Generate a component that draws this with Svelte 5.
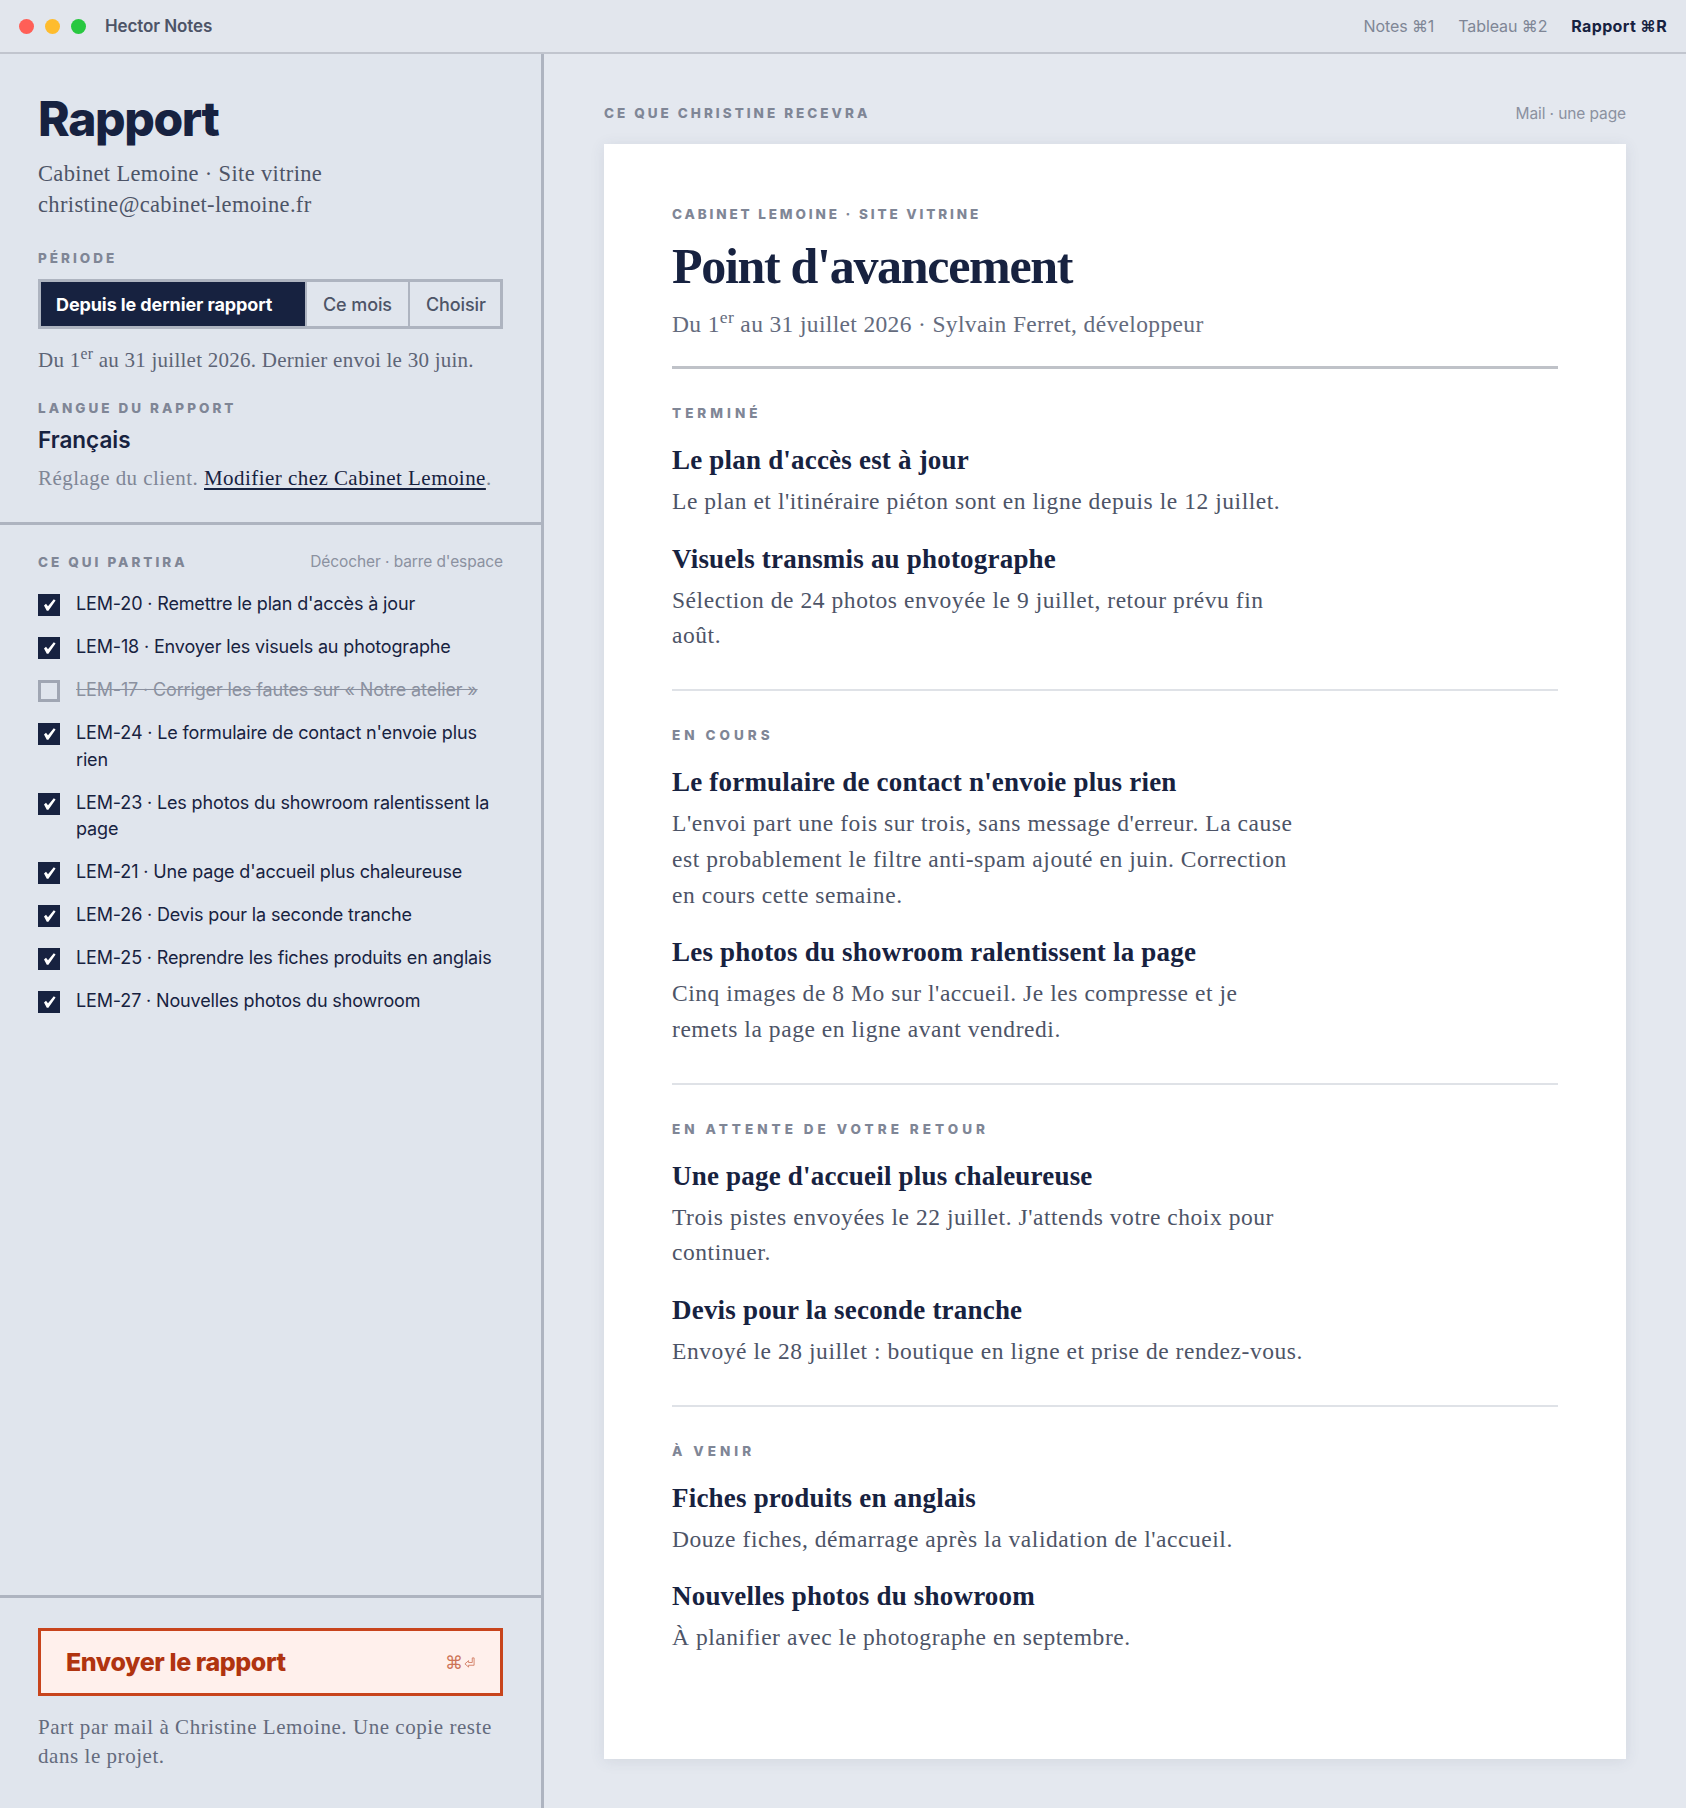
<script>
  const items = [
    { id: "LEM-20", label: "Remettre le plan d'accès à jour", on: true },
    { id: "LEM-18", label: "Envoyer les visuels au photographe", on: true },
    { id: "LEM-17", label: "Corriger les fautes sur « Notre atelier »", on: false },
    { id: "LEM-24", label: "Le formulaire de contact n'envoie plus rien", on: true },
    { id: "LEM-23", label: "Les photos du showroom ralentissent la page", on: true },
    { id: "LEM-21", label: "Une page d'accueil plus chaleureuse", on: true },
    { id: "LEM-26", label: "Devis pour la seconde tranche", on: true },
    { id: "LEM-25", label: "Reprendre les fiches produits en anglais", on: true },
    { id: "LEM-27", label: "Nouvelles photos du showroom", on: true }
  ];

  const sections = [
    {
      title: "Terminé",
      entries: [
        { h: "Le plan d'accès est à jour", p: "Le plan et l'itinéraire piéton sont en ligne depuis le 12 juillet." },
        { h: "Visuels transmis au photographe", p: "Sélection de 24 photos envoyée le 9 juillet, retour prévu fin août." }
      ]
    },
    {
      title: "En cours",
      entries: [
        { h: "Le formulaire de contact n'envoie plus rien", p: "L'envoi part une fois sur trois, sans message d'erreur. La cause est probablement le filtre anti-spam ajouté en juin. Correction en cours cette semaine." },
        { h: "Les photos du showroom ralentissent la page", p: "Cinq images de 8 Mo sur l'accueil. Je les compresse et je remets la page en ligne avant vendredi." }
      ]
    },
    {
      title: "En attente de votre retour",
      entries: [
        { h: "Une page d'accueil plus chaleureuse", p: "Trois pistes envoyées le 22 juillet. J'attends votre choix pour continuer." },
        { h: "Devis pour la seconde tranche", p: "Envoyé le 28 juillet : boutique en ligne et prise de rendez-vous." }
      ]
    },
    {
      title: "À venir",
      entries: [
        { h: "Fiches produits en anglais", p: "Douze fiches, démarrage après la validation de l'accueil." },
        { h: "Nouvelles photos du showroom", p: "À planifier avec le photographe en septembre." }
      ]
    }
  ];
</script>

<div class="app">
  <header class="topbar">
    <div class="lights">
      <span class="light red"></span>
      <span class="light amber"></span>
      <span class="light green"></span>
    </div>
    <span class="appname">Hector Notes</span>
    <nav class="tabs">
      <span>Notes ⌘1</span>
      <span>Tableau ⌘2</span>
      <span class="current">Rapport ⌘R</span>
    </nav>
  </header>

  <div class="body">
    <aside class="side">
      <section class="settings">
        <h1>Rapport</h1>
        <p class="client">Cabinet Lemoine · Site vitrine<br />christine@cabinet-lemoine.fr</p>

        <div class="eyebrow period-label">Période</div>
        <div class="segments">
          <span class="seg active">Depuis le dernier rapport</span>
          <span class="seg">Ce mois</span>
          <span class="seg">Choisir</span>
        </div>
        <p class="range">Du 1<sup>er</sup> au 31 juillet 2026. Dernier envoi le 30 juin.</p>

        <div class="eyebrow lang-label">Langue du rapport</div>
        <div class="lang">Français</div>
        <p class="note">Réglage du client. <a href="#client">Modifier chez Cabinet Lemoine</a>.</p>
      </section>

      <section class="picks">
        <div class="picks-head">
          <span class="eyebrow">Ce qui partira</span>
          <span class="hint">Décocher · barre d'espace</span>
        </div>
        <ul>
          {#each items as item}
            <li class:off={!item.on}>
              <span class="box">
                {#if item.on}
                  <svg viewBox="0 0 22 22" width="22" height="22"><path d="M6 11.500L8 9.800L10 12.200L15.800 5.300L17.600 6.500L10.400 16.700H8.800Z" fill="#fff" /></svg>
                {/if}
              </span>
              <span class="pick-text">{item.id} · {item.label}</span>
            </li>
          {/each}
        </ul>
      </section>

      <section class="send">
        <button class="send-btn">
          <span>Envoyer le rapport</span>
          <span class="keys">⌘<svg viewBox="0 0 12 12" width="11" height="11"><path d="M1 7.500L5 4V6H9V1H11V9H5V11Z" fill="none" stroke="currentColor" stroke-width="0.900" /></svg></span>
        </button>
        <p class="send-note">Part par mail à Christine Lemoine. Une copie reste dans le projet.</p>
      </section>
    </aside>

    <main class="main">
      <div class="main-head">
        <span class="eyebrow">Ce que Christine recevra</span>
        <span class="hint">Mail · une page</span>
      </div>
      <article class="paper">
        <div class="eyebrow paper-label">Cabinet Lemoine · Site vitrine</div>
        <h2>Point d'avancement</h2>
        <p class="byline">Du 1<sup>er</sup> au 31 juillet 2026 · Sylvain Ferret, développeur</p>

        {#each sections as section}
          <section class="block">
            <div class="eyebrow section-label">{section.title}</div>
            {#each section.entries as entry}
              <h3>{entry.h}</h3>
              <p>{entry.p}</p>
            {/each}
          </section>
        {/each}
      </article>
    </main>
  </div>
</div>

<style>
  :global(body) {
    background: #e4e8ef;
  }
  .app {
    display: flex;
    flex-direction: column;
    min-height: 1808px;
    font-family: Inter, "Liberation Sans", sans-serif;
    color: #172240;
  }
  .topbar {
    display: flex;
    align-items: center;
    height: 52px;
    padding: 0 19px;
    background: #e2e6ed;
    border-bottom: 2px solid #c1c5ce;
  }
  .lights {
    display: flex;
    gap: 11px;
  }
  .light {
    width: 15px;
    height: 15px;
    border-radius: 50%;
  }
  .red { background: #ff5f57; }
  .amber { background: #febc2e; }
  .green { background: #28c840; }
  .appname {
    margin-left: 19px;
    font-size: 17px;
    font-weight: 600;
    letter-spacing: -0.1px;
    color: #4d5467;
  }
  .tabs {
    display: flex;
    gap: 24px;
    margin-left: auto;
    font-size: 16px;
    letter-spacing: -0.100px;
    color: #7f8696;
  }
  .tabs .current {
    font-weight: 700;
    letter-spacing: 0.350px;
    color: #172240;
  }
  .body {
    flex: 1;
    display: flex;
  }
  .side {
    width: 541px;
    flex: none;
    display: flex;
    flex-direction: column;
    background: #e0e5ed;
    border-right: 3px solid #aeb4c0;
  }
  .eyebrow {
    font-size: 13.500px;
    font-weight: 800;
    letter-spacing: 3px;
    line-height: 16px;
    text-transform: uppercase;
    color: #7f8696;
  }
  .paper-label {
    letter-spacing: 2.850px;
  }
  .section-label {
    letter-spacing: 4px;
  }
  .settings {
    padding: 37px 38px 29px;
    border-bottom: 3px solid #aeb4c0;
  }
  h1 {
    margin: 0;
    font-size: 48px;
    line-height: 56px;
    font-weight: 800;
    letter-spacing: -1.400px;
  }
  p {
    margin: 0;
    font-family: "Liberation Serif", serif;
  }
  .client {
    margin-top: 11px;
    font-size: 22.500px;
    line-height: 31px;
    letter-spacing: 0.350px;
    color: #4d5467;
  }
  .period-label {
    margin-top: 30px;
  }
  .segments {
    display: flex;
    margin-top: 13px;
    height: 50px;
    box-sizing: border-box;
    border: 3px solid #aeb4c0;
  }
  .seg {
    display: flex;
    align-items: center;
    padding: 0 16px;
    font-size: 18px;
    font-weight: 500;
    letter-spacing: -0.100px;
    white-space: nowrap;
    color: #4d5467;
    border-left: 2px solid #aeb4c0;
  }
  .seg.active {
    flex: none;
    width: 264px;
    box-sizing: border-box;
    padding: 0 15px;
    background: #172240;
    color: #fff;
    font-weight: 700;
    border-left: 0;
  }
  .seg:last-child {
    flex: 1;
  }
  .range {
    margin-top: 16px;
    font-size: 21px;
    line-height: 30px;
    letter-spacing: 0.250px;
    color: #5d6476;
  }
  sup {
    font-size: 0.75em;
    line-height: 0;
  }
  .lang-label {
    margin-top: 25px;
  }
  .lang {
    margin-top: 9px;
    font-size: 22.500px;
    line-height: 30px;
    font-weight: 600;
  }
  .note {
    margin-top: 8px;
    font-size: 21px;
    line-height: 30px;
    letter-spacing: 0.450px;
    color: #7f8696;
  }
  .note a {
    color: #172240;
    text-underline-offset: 3px;
  }
  .picks {
    flex: 1;
    padding: 27px 38px 0;
  }
  .picks-head {
    display: flex;
    justify-content: space-between;
    align-items: center;
  }
  .hint {
    font-size: 15.500px;
    letter-spacing: -0.100px;
    color: #8b91a0;
  }
  ul {
    list-style: none;
    margin: 20px 0 0;
    padding: 0;
    display: flex;
    flex-direction: column;
    gap: 16.500px;
  }
  li {
    display: flex;
    gap: 16px;
    font-size: 18px;
    line-height: 26.500px;
    letter-spacing: -0.150px;
  }
  .box {
    flex: none;
    width: 22px;
    height: 22px;
    margin-top: 3px;
    background: #172240;
    box-sizing: border-box;
  }
  .box svg {
    display: block;
  }
  li.off .box {
    background: none;
    border: 3px solid #a0a6b3;
  }
  li.off .pick-text {
    color: #8b91a0;
    text-decoration: line-through;
  }
  .send {
    padding: 30px 38px 37px;
    border-top: 3px solid #aeb4c0;
  }
  .send-btn {
    display: flex;
    align-items: center;
    justify-content: space-between;
    width: 100%;
    height: 68px;
    padding: 0 25px;
    background: #fff0ec;
    border: 3px solid #c8441c;
    font-family: inherit;
    font-size: 25px;
    font-weight: 800;
    letter-spacing: -0.400px;
    color: #b03410;
  }
  .keys {
    display: flex;
    align-items: center;
    gap: 1px;
    font-family: "DejaVu Sans", sans-serif;
    font-size: 18px;
    font-weight: 400;
    letter-spacing: 0;
    color: #cd7357;
  }
  .send-note {
    margin-top: 17px;
    font-size: 21px;
    line-height: 29px;
    letter-spacing: 0.550px;
    color: #646b7d;
  }
  .main {
    flex: 1;
    padding: 47px 60px 48px;
    min-width: 0;
  }
  .main-head {
    display: flex;
    justify-content: space-between;
    align-items: center;
    height: 24px;
    margin-bottom: 19px;
  }
  .paper {
    padding: 62px 68px 68px;
    background: #fff;
    box-shadow: 0 2px 14px rgba(60, 72, 100, 0.1);
  }
  h2 {
    margin: 14px 0 0;
    font-family: "Liberation Serif", serif;
    font-size: 50px;
    line-height: 60px;
    font-weight: 700;
    letter-spacing: -1.300px;
  }
  .byline {
    margin-top: 11px;
    padding-bottom: 25px;
    border-bottom: 3px solid #bfc2c8;
    font-size: 23.500px;
    line-height: 34px;
    letter-spacing: 0.350px;
    color: #646b7d;
  }
  .block {
    padding: 36px 0 35px;
    border-bottom: 2px solid #dfe2e7;
  }
  .block:last-child {
    border-bottom: 0;
  }
  .block .eyebrow + h3 {
    margin-top: 21px;
  }
  h3 {
    margin: 21px 0 0;
    font-family: "Liberation Serif", serif;
    font-size: 27px;
    line-height: 36px;
    font-weight: 700;
    letter-spacing: 0.200px;
  }
  .block p {
    max-width: 634px;
    margin-top: 6px;
    font-size: 23.500px;
    line-height: 35.700px;
    letter-spacing: 0.550px;
    color: #4d5467;
  }
</style>
